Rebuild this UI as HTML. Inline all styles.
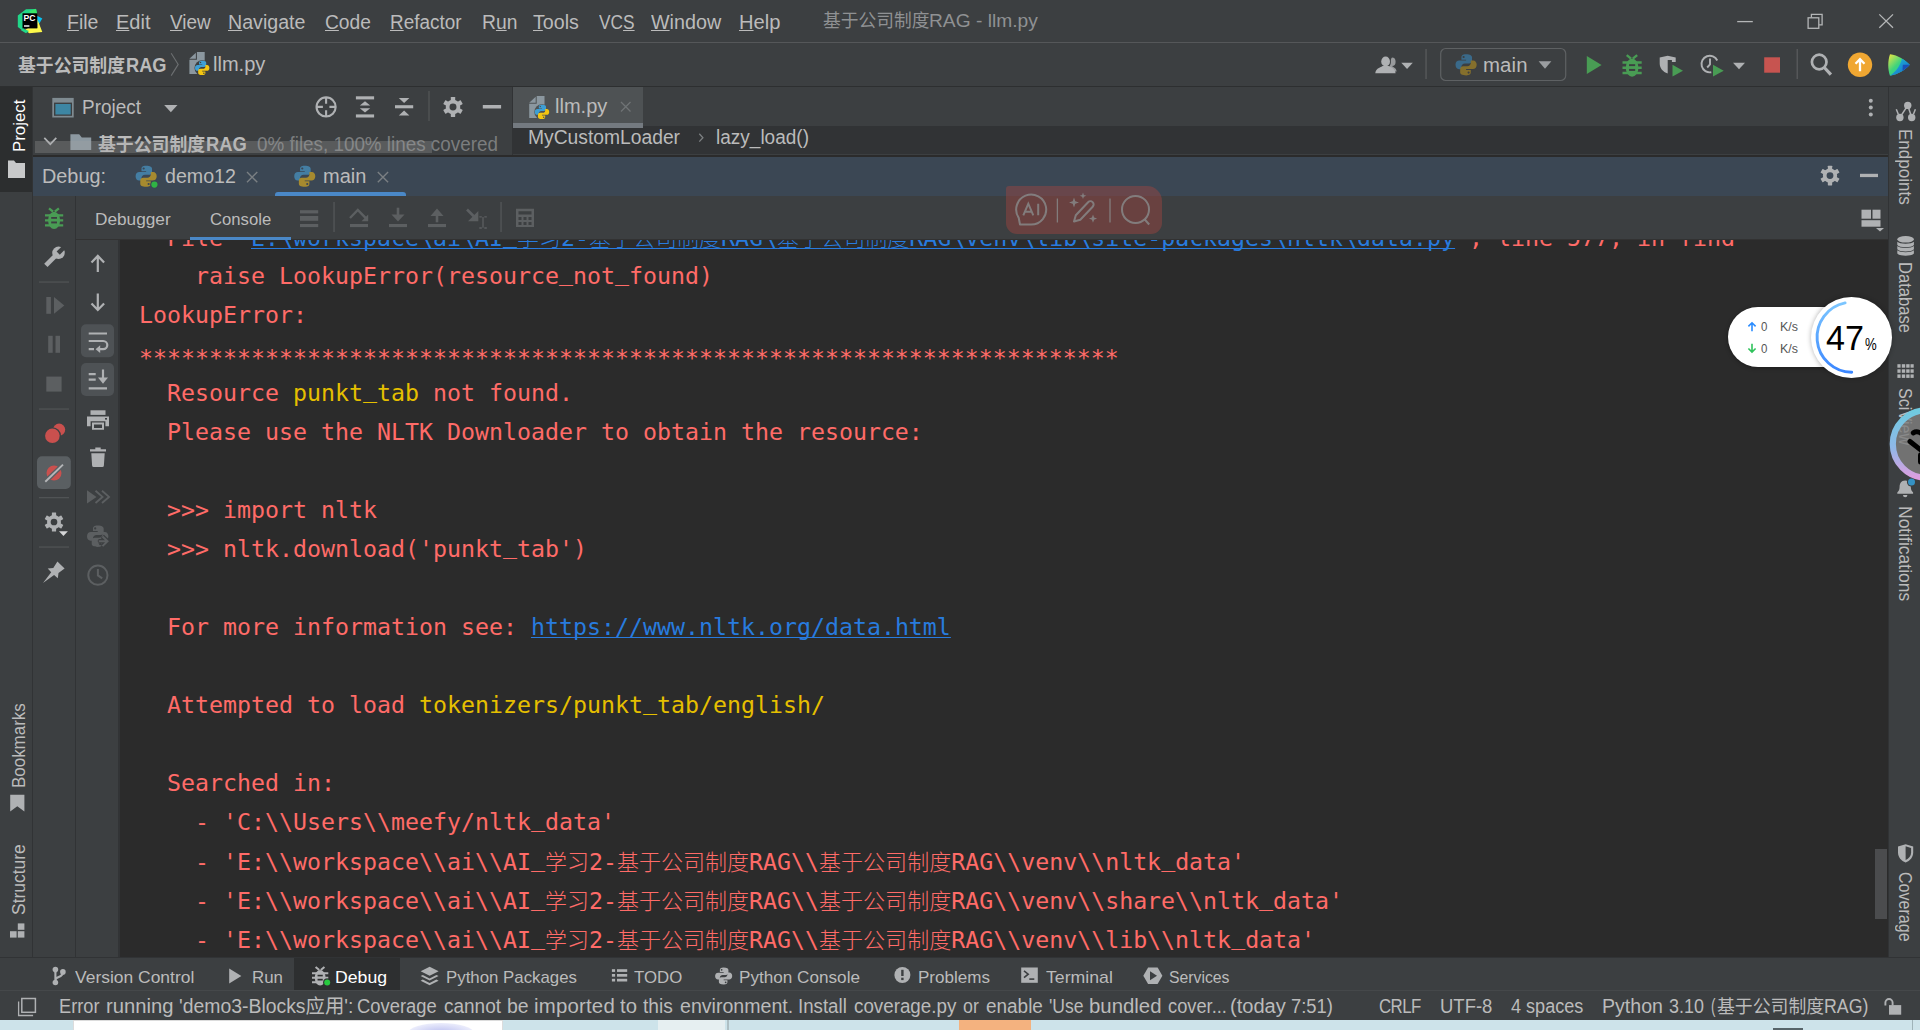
<!DOCTYPE html>
<html lang="zh"><head><meta charset="utf-8"><title>基于公司制度RAG - llm.py</title><style>
html,body{margin:0;padding:0;background:#3c3f41;overflow:hidden}
#root{position:relative;width:1920px;height:1030px;overflow:hidden;background:#3c3f41}
.b{position:absolute}
.i{position:absolute;overflow:visible}
.t{position:absolute;white-space:pre;transform-origin:0 0}
.t u{text-decoration:underline;text-decoration-thickness:1px;text-underline-offset:1.200px}
.r{position:absolute;width:0;height:0;transform-origin:0 0}
.cl0{position:absolute;left:20px;height:39px;white-space:pre;font:400 23.25px/39px 'DejaVu Sans Mono','Liberation Mono',monospace;letter-spacing:0}
.cj{font:300 22px/39px 'Noto Sans CJK SC',sans-serif}
.us{position:relative;top:-4px}.as{position:relative;top:4px}
.cr{color:#ff6b68}.cy{color:#e5bf00}.cl{color:#287bde;text-decoration:underline;text-decoration-thickness:1px;text-underline-offset:1.600px;text-decoration-skip-ink:none}
</style></head><body><div id="root">
<div class="b" style="left:0px;top:0px;width:1920px;height:1020px;background:#3c3f41;"></div>
<div class="b" style="left:0px;top:42px;width:1920px;height:1px;background:#555759;"></div>
<div class="b" style="left:0px;top:86px;width:1920px;height:1px;background:#2d2f30;"></div>
<div class="b" style="left:0px;top:87px;width:33px;height:870px;background:#3c3f41;"></div>
<div class="b" style="left:0px;top:87px;width:32px;height:105px;background:#2c2e2f;"></div>
<div class="b" style="left:32px;top:87px;width:1px;height:870px;background:#313335;"></div>
<div class="b" style="left:1888px;top:87px;width:1px;height:870px;background:#313335;"></div>
<div class="b" style="left:512px;top:87px;width:1px;height:69px;background:#313335;"></div>
<div class="b" style="left:513px;top:87px;width:130px;height:41px;background:#4e5254;"></div>
<div class="b" style="left:513px;top:123.3px;width:130px;height:4.7px;background:#747a80;"></div>
<div class="b" style="left:643px;top:126px;width:1245px;height:27.6px;background:#313335;"></div>
<div class="b" style="left:513px;top:128px;width:130px;height:25.6px;background:#313335;"></div>
<div class="b" style="left:33px;top:155.2px;width:1855px;height:1.8px;background:#2b2b2b;"></div>
<div class="b" style="left:33px;top:157px;width:1855px;height:39px;background:#3b4754;"></div>
<div class="b" style="left:275px;top:192px;width:131px;height:4px;background:#4a88c7;border-radius:3px 3px 0 0"></div>
<div class="b" style="left:75px;top:196px;width:1px;height:761px;background:#313335;"></div>
<div class="b" style="left:76px;top:239px;width:1812px;height:1px;background:#323232;"></div>
<div class="b" style="left:190px;top:237px;width:101px;height:3px;background:#4a88c7;"></div>
<div class="b" style="left:119px;top:240px;width:1769px;height:717px;background:#2b2b2b;"></div>
<div class="b" style="left:118px;top:240px;width:2px;height:717px;background:#323436;"></div>
<div class="b" id="console" style="left:119px;top:240px;width:1769px;height:717px;overflow:hidden">
<div class="cl0" style="top:-22.90px"><span class="cr">  File &quot;</span><span class="cl">E:\workspace\ai\AI<span class="us">_</span><span class="cj">学</span><span class="cj">习</span>2-<span class="cj">基</span><span class="cj">于</span><span class="cj">公</span><span class="cj">司</span><span class="cj">制</span><span class="cj">度</span>RAG\<span class="cj">基</span><span class="cj">于</span><span class="cj">公</span><span class="cj">司</span><span class="cj">制</span><span class="cj">度</span>RAG\venv\lib\site-packages\nltk\data.py</span><span class="cr">&quot;, line 577, in find</span></div>
<div class="cl0" style="top:16.10px"><span class="cr">    raise LookupError(resource<span class="us">_</span>not<span class="us">_</span>found)</span></div>
<div class="cl0" style="top:55.10px"><span class="cr">LookupError:</span></div>
<div class="cl0" style="top:94.10px"><span class="cr"><span class="as">**********************************************************************</span></span></div>
<div class="cl0" style="top:133.10px"><span class="cr">  Resource </span><span class="cy">punkt<span class="us">_</span>tab</span><span class="cr"> not found.</span></div>
<div class="cl0" style="top:172.10px"><span class="cr">  Please use the NLTK Downloader to obtain the resource:</span></div>
<div class="cl0" style="top:250.10px"><span class="cr">  &gt;&gt;&gt; import nltk</span></div>
<div class="cl0" style="top:289.10px"><span class="cr">  &gt;&gt;&gt; nltk.download(&#x27;punkt<span class="us">_</span>tab&#x27;)</span></div>
<div class="cl0" style="top:367.10px"><span class="cr">  For more information see: </span><span class="cl">https://www.nltk.org/data.html</span></div>
<div class="cl0" style="top:445.10px"><span class="cr">  Attempted to load </span><span class="cy">tokenizers/punkt<span class="us">_</span>tab/english/</span></div>
<div class="cl0" style="top:523.10px"><span class="cr">  Searched in:</span></div>
<div class="cl0" style="top:562.10px"><span class="cr">    - &#x27;C:\\Users\\meefy/nltk<span class="us">_</span>data&#x27;</span></div>
<div class="cl0" style="top:601.10px"><span class="cr">    - &#x27;E:\\workspace\\ai\\AI<span class="us">_</span><span class="cj">学</span><span class="cj">习</span>2-<span class="cj">基</span><span class="cj">于</span><span class="cj">公</span><span class="cj">司</span><span class="cj">制</span><span class="cj">度</span>RAG\\<span class="cj">基</span><span class="cj">于</span><span class="cj">公</span><span class="cj">司</span><span class="cj">制</span><span class="cj">度</span>RAG\\venv\\nltk<span class="us">_</span>data&#x27;</span></div>
<div class="cl0" style="top:640.10px"><span class="cr">    - &#x27;E:\\workspace\\ai\\AI<span class="us">_</span><span class="cj">学</span><span class="cj">习</span>2-<span class="cj">基</span><span class="cj">于</span><span class="cj">公</span><span class="cj">司</span><span class="cj">制</span><span class="cj">度</span>RAG\\<span class="cj">基</span><span class="cj">于</span><span class="cj">公</span><span class="cj">司</span><span class="cj">制</span><span class="cj">度</span>RAG\\venv\\share\\nltk<span class="us">_</span>data&#x27;</span></div>
<div class="cl0" style="top:679.10px"><span class="cr">    - &#x27;E:\\workspace\\ai\\AI<span class="us">_</span><span class="cj">学</span><span class="cj">习</span>2-<span class="cj">基</span><span class="cj">于</span><span class="cj">公</span><span class="cj">司</span><span class="cj">制</span><span class="cj">度</span>RAG\\<span class="cj">基</span><span class="cj">于</span><span class="cj">公</span><span class="cj">司</span><span class="cj">制</span><span class="cj">度</span>RAG\\venv\\lib\\nltk<span class="us">_</span>data&#x27;</span></div>
</div>
<div class="b" style="left:1875px;top:849px;width:12.3px;height:70px;background:#4b4c4e;"></div>
<div class="b" style="left:0px;top:957px;width:1920px;height:1px;background:#313335;"></div>
<div class="b" style="left:294px;top:958px;width:106px;height:33px;background:#2d2f30;"></div>
<div class="b" style="left:0px;top:990px;width:1920px;height:1px;background:#45484a;"></div>
<div class="b" style="left:0px;top:1019.5px;width:1920px;height:10.5px;background:#cde3ea;"></div>
<div class="b" style="left:72.5px;top:1020px;width:430px;height:10px;background:#dcdcdc;"></div>
<div class="b" style="left:73.5px;top:1021px;width:428px;height:9px;background:#ffffff;"></div>
<div class="b" style="left:658px;top:1020px;width:67px;height:10px;background:#e6eff1;"></div>
<div class="b" style="left:727px;top:1020px;width:2px;height:10px;background:#aebfc4;"></div>
<div class="b" style="left:959px;top:1020px;width:72px;height:10px;background:#f4b27f;"></div>
<div class="b" style="left:1912px;top:1020px;width:1px;height:10px;background:#9fb3b9;"></div>
<div class="b" style="left:408px;top:1023px;width:66px;height:20px;border-radius:50%;background:radial-gradient(ellipse at center,#b9bdf0 0%,#e4e6fa 60%,#ffffff 100%)"></div>
<div class="b" style="left:1773px;top:1028px;width:30px;height:2px;background:#3a4448;opacity:.8"></div>
<svg class="i" style="left:0;top:0" width="1920" height="1030" viewBox="0 0 1920 1030"><g><path fill="#21d789" d="M17.800 15.500L26 9.200 36.200 9l1 5H24v17.500L17.800 27z"/><path fill="#3bea62" d="M28 12l7.700-3.200 1.500 5.500z" opacity=".9"/><path fill="#07c3f2" d="M37 15.800l5.300 2.700-3.300 5.500H37z"/><path fill="#fcf84a" d="M37.300 19l5 13-13 1.200-4.300-3.200 3-2h9.300z"/><path fill="#21d789" d="M22.500 28.400l6.500 2.600-3 2.200-5-3z"/><rect x="22.500" y="13.300" width="14.800" height="15.100" fill="#000"/><rect x="24" y="25.300" width="5.400" height="1.400" fill="#fff"/></g>
<g fill="none" stroke="#b4b6b7" stroke-width="1.300"><path d="M1737.200 21.600h15.600"/><rect x="1808.100" y="17.800" width="10.700" height="10.500"/><path d="M1811.400 17.500v-3.100h10.700v10.500h-3"/><path d="M1879.300 14.400l13.700 13.400M1893 14.400l-13.700 13.400"/></g>
<path d="M171.200 53.200L178.200 64.400 171.200 75.600" fill="none" stroke="#6c6f71" stroke-width="1.1"/>
<g transform="translate(189.4 52) scale(1)" ><path fill="#8b979f" d="M0 6.700L6.500 .700V6.700z"/><path fill="#8b979f" d="M7.500 0H15.300V21.900H0V7.700H7.500z"/><circle cx="12.800" cy="15.900" r="7.700" fill="#3c3f41"/></g><g transform="translate(193.72941176470587 59.42941176470588) scale(1.0588235294117647)" ><path fill="#3e9fd4" d="M7.9 1.2C5.6 1.2 5 2.1 5 3.2v1.5h3v.6H3.6C2.3 5.3 1.2 6.2 1.2 8s1 2.8 2.2 2.8H5V9.2C5 8 6 7.1 7.2 7.1h2.7c1.1 0 1.9-.8 1.9-1.9v-2c0-1.100-1-2-3.900-2zM6.400 2.300a.7.7 0 1 1 0 1.400.7.700 0 0 1 0-1.400z"/><path fill="#f2c511" transform="rotate(180 8 8)" d="M7.9 1.2C5.6 1.2 5 2.1 5 3.2v1.5h3v.6H3.6C2.3 5.3 1.2 6.2 1.2 8s1 2.8 2.2 2.8H5V9.2C5 8 6 7.1 7.2 7.1h2.7c1.1 0 1.9-.8 1.9-1.9v-2c0-1.100-1-2-3.900-2zM6.400 2.300a.7.7 0 1 1 0 1.400.7.700 0 0 1 0-1.400z"/></g>
<g transform="translate(529.2 96) scale(1)" ><path fill="#8b979f" d="M0 6.700L6.500 .700V6.700z"/><path fill="#8b979f" d="M7.500 0H15.300V21.900H0V7.700H7.500z"/><circle cx="12.800" cy="15.900" r="7.700" fill="#4e5254"/></g><g transform="translate(533.529411764706 103.42941176470589) scale(1.0588235294117647)" ><path fill="#3e9fd4" d="M7.9 1.2C5.6 1.2 5 2.1 5 3.2v1.5h3v.6H3.6C2.3 5.3 1.2 6.2 1.2 8s1 2.8 2.2 2.8H5V9.2C5 8 6 7.1 7.2 7.1h2.7c1.1 0 1.9-.8 1.9-1.9v-2c0-1.100-1-2-3.900-2zM6.400 2.300a.7.7 0 1 1 0 1.400.7.700 0 0 1 0-1.400z"/><path fill="#f2c511" transform="rotate(180 8 8)" d="M7.9 1.2C5.6 1.2 5 2.1 5 3.2v1.5h3v.6H3.6C2.3 5.3 1.2 6.2 1.2 8s1 2.8 2.2 2.8H5V9.2C5 8 6 7.1 7.2 7.1h2.7c1.1 0 1.9-.8 1.9-1.9v-2c0-1.100-1-2-3.900-2zM6.400 2.300a.7.7 0 1 1 0 1.400.7.700 0 0 1 0-1.400z"/></g>
<rect x="52.300" y="97.900" width="21.400" height="19.600" fill="#7f8b91"/><rect x="54" y="102.600" width="18" height="13.200" fill="#3c3f41"/><rect x="55.400" y="104" width="15.300" height="10.500" fill="#3d86a3"/>
<path d="M164.200 105h13.300l-6.650 7.300z" fill="#afb1b3"/>
<g fill="none" stroke="#afb1b3" stroke-width="2.100"><circle cx="326.100" cy="106.900" r="9.550"/><path d="M326.100 97.500v6.200M326.100 110.200v6.200M316.700 106.900h6.200M329.400 106.900h6.200"/></g>
<g fill="#afb1b3"><rect x="355.900" y="96.300" width="18.200" height="3.100"/><rect x="355.900" y="114.400" width="18.200" height="3.100"/><path d="M365 101.300l5.200 4.300h-10.400zM365 112.500l5.200-4.300h-10.400z"/></g>
<g fill="#afb1b3"><rect x="395" y="105.200" width="18.200" height="3.100"/><path d="M404.100 103.100l5.300-5h-10.600zM404.100 110.500l5.300 5h-10.600z"/></g>
<rect x="428.400" y="91" width="1.200" height="30" fill="#555759"/>
<g transform="translate(440.8787878787879 94.87878787878788) scale(1.5151515151515151)" ><g transform="translate(8 8)" fill="#afb1b3"><rect x="-1.45" y="-6.6" width="2.9" height="3" rx=".3" transform="rotate(0)"/><rect x="-1.45" y="-6.6" width="2.9" height="3" rx=".3" transform="rotate(60)"/><rect x="-1.45" y="-6.6" width="2.9" height="3" rx=".3" transform="rotate(120)"/><rect x="-1.45" y="-6.6" width="2.9" height="3" rx=".3" transform="rotate(180)"/><rect x="-1.45" y="-6.6" width="2.9" height="3" rx=".3" transform="rotate(240)"/><rect x="-1.45" y="-6.6" width="2.9" height="3" rx=".3" transform="rotate(300)"/><circle r="3.55" fill="none" stroke="#afb1b3" stroke-width="2.5"/></g></g>
<rect x="482.800" y="105" width="18.300" height="3.500" fill="#afb1b3"/>
<path d="M44.300 137.800l6 6.400 6-6.400" fill="none" stroke="#afb1b3" stroke-width="1.700"/>
<path fill="#8d99a1" d="M70.400 134.200h8.800l2.600 3.300h9.400V150H70.400z"/>
<path d="M621 102l9.500 9.500M630.500 102l-9.500 9.500" stroke="#6f7375" stroke-width="1.300" fill="none"/>
<path d="M699.300 133.800l3.600 3.900-3.600 3.900" fill="none" stroke="#7d8082" stroke-width="1.300"/>
<g fill="#afb1b3"><circle cx="1870.800" cy="100.800" r="2"/><circle cx="1870.800" cy="107.600" r="2"/><circle cx="1870.800" cy="114.400" r="2"/></g><g transform="translate(133.73823529411763 163.83823529411762) scale(1.5514705882352942)" ><path fill="#447ea3" d="M7.9 1.2C5.6 1.2 5 2.1 5 3.2v1.5h3v.6H3.6C2.3 5.3 1.2 6.2 1.2 8s1 2.8 2.2 2.8H5V9.2C5 8 6 7.1 7.2 7.1h2.7c1.1 0 1.9-.8 1.9-1.9v-2c0-1.100-1-2-3.900-2zM6.400 2.300a.7.7 0 1 1 0 1.400.7.700 0 0 1 0-1.400z"/><path fill="#a68a2f" transform="rotate(180 8 8)" d="M7.9 1.2C5.6 1.2 5 2.1 5 3.2v1.5h3v.6H3.6C2.3 5.3 1.2 6.2 1.2 8s1 2.8 2.2 2.8H5V9.2C5 8 6 7.1 7.2 7.1h2.7c1.1 0 1.9-.8 1.9-1.9v-2c0-1.100-1-2-3.900-2zM6.400 2.300a.7.7 0 1 1 0 1.400.7.700 0 0 1 0-1.400z"/></g>
<circle cx="154.400" cy="184.600" r="4.200" fill="#3b4754"/><circle cx="154.400" cy="184.600" r="3.100" fill="#2fb344"/>
<g transform="translate(292.3382352941176 163.83823529411762) scale(1.5514705882352942)" ><path fill="#447ea3" d="M7.9 1.2C5.6 1.2 5 2.1 5 3.2v1.5h3v.6H3.6C2.3 5.3 1.2 6.2 1.2 8s1 2.8 2.2 2.8H5V9.2C5 8 6 7.1 7.2 7.1h2.7c1.1 0 1.9-.8 1.9-1.9v-2c0-1.100-1-2-3.900-2zM6.400 2.300a.7.7 0 1 1 0 1.400.7.700 0 0 1 0-1.400z"/><path fill="#a68a2f" transform="rotate(180 8 8)" d="M7.9 1.2C5.6 1.2 5 2.1 5 3.2v1.5h3v.6H3.6C2.3 5.3 1.2 6.2 1.2 8s1 2.8 2.2 2.8H5V9.2C5 8 6 7.1 7.2 7.1h2.7c1.1 0 1.9-.8 1.9-1.9v-2c0-1.100-1-2-3.900-2zM6.400 2.300a.7.7 0 1 1 0 1.400.7.700 0 0 1 0-1.400z"/></g>
<path d="M247 172l10.300 10.300M257.300 172l-10.300 10.300" stroke="#7a7f83" stroke-width="1.400" fill="none"/>
<path d="M377.800 172l10.300 10.300M388.100 172l-10.300 10.300" stroke="#7a7f83" stroke-width="1.400" fill="none"/>
<g transform="translate(1818.121212121212 163.72121212121212) scale(1.484848484848485)" ><g transform="translate(8 8)" fill="#afb1b3"><rect x="-1.45" y="-6.6" width="2.9" height="3" rx=".3" transform="rotate(0)"/><rect x="-1.45" y="-6.6" width="2.9" height="3" rx=".3" transform="rotate(60)"/><rect x="-1.45" y="-6.6" width="2.9" height="3" rx=".3" transform="rotate(120)"/><rect x="-1.45" y="-6.6" width="2.9" height="3" rx=".3" transform="rotate(180)"/><rect x="-1.45" y="-6.6" width="2.9" height="3" rx=".3" transform="rotate(240)"/><rect x="-1.45" y="-6.6" width="2.9" height="3" rx=".3" transform="rotate(300)"/><circle r="3.55" fill="none" stroke="#afb1b3" stroke-width="2.5"/></g></g>
<rect x="1860" y="173.800" width="18" height="3.300" fill="#afb1b3"/>
<g fill="#afb1b3"><rect x="1861.500" y="209.700" width="9.500" height="9"/><rect x="1872.500" y="209.700" width="8" height="9"/><rect x="1861.500" y="220.200" width="19" height="6.500"/><path d="M1876 228h8l-4 3.600z"/></g>
<g transform="translate(45 208.1) scale(1.0)" ><g fill="none" stroke="#499c54" stroke-width="2.300"><path d="M4 .3l4.100 3.300M13.900 .3l-4.100 3.300"/><path d="M0 7.300h18.200M0 12.200h18.200M0 17.200h18.200"/></g><ellipse cx="9.100" cy="12.200" rx="6" ry="8.600" fill="#499c54"/><rect x="6.200" y="8.900" width="5.800" height="1.800" fill="#3c3f41"/><rect x="6.200" y="13.400" width="5.800" height="1.900" fill="#3c3f41"/></g>
<g transform="translate(58.500 252.800) rotate(45)"><circle r="6.250" fill="#afb1b3"/><rect x="-2.350" y="3" width="4.700" height="14.900" fill="#afb1b3"/><rect x="-2.250" y="-7.500" width="4.500" height="7.900" fill="#3c3f41"/></g>
<rect x="39" y="281.4" width="30" height="1.300" fill="#505355"/>
<rect x="39" y="408.4" width="30" height="1.300" fill="#505355"/>
<rect x="39" y="497.0" width="30" height="1.300" fill="#505355"/>
<rect x="39" y="546.4" width="30" height="1.300" fill="#505355"/>
<g fill="#5c5f61"><rect x="46.300" y="297" width="4.600" height="16.800"/><path d="M54 297l10.300 8.400L54 313.800z"/></g>
<g fill="#5c5f61"><rect x="48.200" y="335.800" width="4.500" height="17"/><rect x="55.500" y="335.800" width="4.500" height="17"/></g>
<rect x="46.300" y="376.600" width="15.300" height="15" fill="#5c5f61"/>
<circle cx="59.100" cy="429.700" r="6.100" fill="#c9504e"/><circle cx="52.400" cy="435.800" r="8.600" fill="#3c3f41"/><circle cx="52.400" cy="435.800" r="7.300" fill="#c9504e"/>
<rect x="37" y="456.200" width="33.800" height="32.700" rx="5" fill="#5a5f62"/>
<circle cx="54" cy="473" r="7.500" fill="#c9504e"/><path d="M45.500 481.500L62.800 464.800" stroke="#5a5f62" stroke-width="4.600"/><path d="M45.300 481.700L63 464.600" stroke="#b4b6b8" stroke-width="1.900"/>
<g transform="translate(42.36363636363636 510.3636363636364) scale(1.4545454545454546)" ><g transform="translate(8 8)" fill="#afb1b3"><rect x="-1.45" y="-6.6" width="2.9" height="3" rx=".3" transform="rotate(0)"/><rect x="-1.45" y="-6.6" width="2.9" height="3" rx=".3" transform="rotate(60)"/><rect x="-1.45" y="-6.6" width="2.9" height="3" rx=".3" transform="rotate(120)"/><rect x="-1.45" y="-6.6" width="2.9" height="3" rx=".3" transform="rotate(180)"/><rect x="-1.45" y="-6.6" width="2.9" height="3" rx=".3" transform="rotate(240)"/><rect x="-1.45" y="-6.6" width="2.9" height="3" rx=".3" transform="rotate(300)"/><circle r="3.55" fill="none" stroke="#afb1b3" stroke-width="2.5"/></g></g>
<path d="M59 531.200h8.900l-4.450 4.800z" fill="#d5d6d7"/>
<path d="M43 583L51.200 572.200 47.700 568.500 53.300 568.100 57.400 561.400 64.600 568.400 58.500 573.100 57.800 578.300 54.100 575.100z" fill="#afb1b3"/>
<g fill="none" stroke="#afb1b3" stroke-width="2.200"><path d="M97.800 272V256.500M91.500 262.500l6.300-6.600 6.300 6.600"/><path d="M97.800 293.600V309.500M91.500 303.400l6.300 6.600 6.300-6.600"/></g>
<rect x="81" y="324.200" width="33" height="33" rx="5" fill="#4e5255"/>
<g fill="none" stroke="#afb1b3" stroke-width="2.200"><path d="M88.700 333.500h18.300M88.700 341h14.500a4.100 4.100 0 0 1 0 8.200h-3.500M88.700 349.200h5.300"/></g><path d="M100.200 345.300v7.800l-4.600-3.900z" fill="#afb1b3"/>
<rect x="81" y="363" width="33" height="33" rx="5" fill="#4e5255"/>
<g fill="none" stroke="#afb1b3" stroke-width="2.200"><path d="M88.700 374.200h7M88.700 379.700h7M88.700 388.300h18.300M103 369.500v11"/></g><path d="M98 377.500h10l-5 6.300z" fill="#afb1b3"/>
<g fill="#afb1b3"><rect x="90.500" y="410.300" width="15" height="4.600"/><path d="M87 416.500h22v9.800h-3.600v-5h-14.800v5H87z"/><path d="M92 422.600h12v7.200H92zM94 424.400v3.600h8v-3.600z" fill-rule="evenodd"/><rect x="105" y="418" width="2" height="1.600" fill="#3c3f41"/></g>
<g fill="#afb1b3"><path d="M95.300 447.400h5.400v1.800h5.300v2.400H90v-2.400h5.300z"/><path d="M91.300 453.300h13.400l-.8 12.200a1.600 1.600 0 0 1-1.600 1.500h-8.600a1.600 1.600 0 0 1-1.600-1.500z"/></g>
<path d="M87 490.300l9.500 6.600-9.500 6.600z" fill="#5c5f61"/><path d="M95.500 490.800l7 6.100-7 6.100M102 490.800l7 6.100-7 6.100" fill="none" stroke="#5c5f61" stroke-width="1.900"/>
<g transform="translate(85.11176470588235 523.7117647058824) scale(1.5735294117647058)" ><path fill="#5c5f61" d="M7.9 1.2C5.6 1.2 5 2.1 5 3.2v1.5h3v.6H3.6C2.3 5.3 1.2 6.2 1.2 8s1 2.8 2.2 2.8H5V9.2C5 8 6 7.1 7.2 7.1h2.7c1.1 0 1.9-.8 1.9-1.9v-2c0-1.100-1-2-3.900-2zM6.400 2.300a.7.7 0 1 1 0 1.400.7.700 0 0 1 0-1.400z"/><path fill="#5c5f61" transform="rotate(180 8 8)" d="M7.9 1.2C5.6 1.2 5 2.1 5 3.2v1.5h3v.6H3.6C2.3 5.3 1.2 6.2 1.2 8s1 2.8 2.2 2.8H5V9.2C5 8 6 7.1 7.2 7.1h2.7c1.1 0 1.9-.8 1.9-1.9v-2c0-1.100-1-2-3.900-2zM6.400 2.300a.7.7 0 1 1 0 1.400.7.700 0 0 1 0-1.400z"/></g>
<path d="M102.300 536.300l5.200 5-5.200 5M98.500 541.300h8" stroke="#3c3f41" stroke-width="4.600" fill="none"/><path d="M102.500 536.500l5 4.800-5 4.800M99 541.300h8" stroke="#5c5f61" stroke-width="2" fill="none"/>
<circle cx="97.900" cy="575.200" r="9.600" fill="none" stroke="#5c5f61" stroke-width="2"/><path d="M97.900 569v6.400l4.300 3" fill="none" stroke="#5c5f61" stroke-width="2"/>
<g fill="#5c5f61"><rect x="300" y="210.200" width="18.200" height="3.200"/><rect x="300" y="216" width="18.200" height="4.800"/><rect x="300" y="224" width="18.200" height="3.100"/></g>
<rect x="333.300" y="202" width="1.500" height="30" fill="#515456"/><rect x="500.300" y="202" width="1.500" height="30" fill="#515456"/>
<g fill="#5c5f61"><rect x="350" y="224" width="18" height="3.100"/><path d="M361.500 221.300h6.700v-6.700z"/></g><path d="M350 218l7.800-8 8 8.200" fill="none" stroke="#5c5f61" stroke-width="2.400"/>
<g fill="#5c5f61"><rect x="389" y="224" width="18" height="3.100"/><path d="M391.500 214.500h13l-6.500 7z"/><rect x="396.700" y="207.700" width="2.600" height="8"/></g>
<g fill="#5c5f61"><rect x="428" y="224" width="18" height="3.100"/><path d="M430.500 216h13l-6.500-7.500z"/><rect x="435.700" y="215" width="2.600" height="7.300"/></g>
<path d="M467 209.500l8.500 8.500" stroke="#5c5f61" stroke-width="2.600" fill="none"/><path d="M478.300 211v10.300h-10.300z" fill="#5c5f61"/><path d="M479.300 216.800h2.500m2.500 0h2.500M479.300 228h2.500m2.500 0h2.500M483 217v10.800" stroke="#5c5f61" stroke-width="1.300" fill="none"/>
<g fill="#5c5f61"><path d="M516 208.800h18V227h-18zM518.500 211.300v3.200h13v-3.200zM518.500 217v3h3v-3zM523.500 217v3h3v-3zM528.500 217v3h3v-3zM518.500 222v3h3v-3zM523.500 222v3h3v-3zM528.500 222v3h3v-3z" fill-rule="evenodd"/></g><g fill="#afb1b3"><path d="M1392 57.500a3.600 4.300 0 0 1 0 8.600c1.500 1.500 4.300 2 4.600 5.400h-4.200c-.8-2.500-2.600-3.600-3.500-4.500 1.400-1.500 2-3.400 2-5 0-1.700-.3-3 1.100-4.500z" opacity=".8"/><ellipse cx="1385.600" cy="61.500" rx="4.400" ry="5.100"/><path d="M1375.300 73.200c.3-4.600 4.200-5.500 7.300-7.300h6c3.100 1.800 6.700 2.700 7 7.300z"/></g>
<path d="M1401.300 62.700h11.500l-5.750 6.300z" fill="#afb1b3"/>
<rect x="1425.300" y="49" width="1.500" height="30" fill="#555759"/>
<rect x="1440.700" y="48.500" width="125" height="32" rx="5" fill="none" stroke="#5e6163" stroke-width="1.200"/>
<g transform="translate(1453.629411764706 52.32941176470589) scale(1.5588235294117647)" ><path fill="#3a6a8a" d="M7.9 1.2C5.6 1.2 5 2.1 5 3.2v1.5h3v.6H3.6C2.3 5.3 1.2 6.2 1.2 8s1 2.8 2.2 2.8H5V9.2C5 8 6 7.1 7.2 7.1h2.7c1.1 0 1.9-.8 1.9-1.9v-2c0-1.100-1-2-3.900-2zM6.400 2.300a.7.7 0 1 1 0 1.400.7.700 0 0 1 0-1.400z"/><path fill="#846f2c" transform="rotate(180 8 8)" d="M7.9 1.2C5.6 1.2 5 2.1 5 3.2v1.5h3v.6H3.6C2.3 5.3 1.2 6.2 1.2 8s1 2.8 2.2 2.8H5V9.2C5 8 6 7.1 7.2 7.1h2.7c1.1 0 1.9-.8 1.9-1.9v-2c0-1.100-1-2-3.900-2zM6.400 2.300a.7.7 0 1 1 0 1.400.7.700 0 0 1 0-1.400z"/></g>
<path d="M1538.600 61.200h12.800l-6.400 7.600z" fill="#9a9da0"/>
<path d="M1586.800 56l14.800 9-14.800 9z" fill="#499c54"/>
<g transform="translate(1622.5 54.8) scale(1.054945054945055)" ><g fill="none" stroke="#499c54" stroke-width="2.300"><path d="M4 .3l4.100 3.300M13.900 .3l-4.100 3.300"/><path d="M0 7.300h18.200M0 12.200h18.200M0 17.200h18.200"/></g><ellipse cx="9.100" cy="12.200" rx="6" ry="8.600" fill="#499c54"/><rect x="6.200" y="8.900" width="5.800" height="1.800" fill="#3c3f41"/><rect x="6.200" y="13.400" width="5.800" height="1.900" fill="#3c3f41"/></g>
<path d="M1659.700 57.500l8-1.700 8 1.700v4.500h-3.800v-2h-4.200v13.500c-4.800-1.600-8-5.300-8-10z" fill="#afb1b3"/><path d="M1667.700 58h4.200v15.300" fill="none" stroke="#afb1b3" stroke-width="0"/><path d="M1672.500 64.800l10.500 5.850-10.500 5.850z" fill="#499c54"/>
<path d="M1717.300 60.500a8.300 8.300 0 1 0-6 11.700" fill="none" stroke="#afb1b3" stroke-width="1.900"/><path d="M1710 58.500v6l-2.800 3" fill="none" stroke="#afb1b3" stroke-width="1.900"/><path d="M1713 64.800l10.700 5.850-10.700 5.850z" fill="#499c54"/>
<path d="M1733 62.700h12l-6 6.600z" fill="#afb1b3"/>
<rect x="1764.200" y="57.300" width="15.800" height="15.400" fill="#c75450"/>
<rect x="1796.500" y="49" width="1.500" height="30" fill="#555759"/>
<circle cx="1819.200" cy="62" r="7.300" fill="none" stroke="#afb1b3" stroke-width="2.700"/><path d="M1824.300 67.500l6.600 7.200" stroke="#afb1b3" stroke-width="3.200"/>
<circle cx="1860" cy="64.800" r="12.200" fill="#f0a732"/><path d="M1860 71.300v-11.500M1855.500 63.700l4.500-4.500 4.500 4.500" fill="none" stroke="#fff" stroke-width="2.300"/>
<defs><linearGradient id="lg1" x1="0" y1="0" x2="1" y2="1"><stop offset="0" stop-color="#f2e640"/><stop offset=".45" stop-color="#3fd47c"/><stop offset="1" stop-color="#17b8c9"/></linearGradient><linearGradient id="lg2" x1="0" y1="0" x2="1" y2="1"><stop offset="0" stop-color="#1bc6d9"/><stop offset="1" stop-color="#1a62c9"/></linearGradient></defs><path d="M1890 54.200c8 1 15 5.500 19.700 10.600-4.700 5.100-11.700 9.900-19.700 10.900-2.300-6.500-2.300-15 0-21.500z" fill="url(#lg1)"/><path d="M1902 58.700c3 1.700 5.500 3.700 7.700 6.100-4.700 5.100-11.700 9.900-19.700 10.900 5.500-3.700 10-9.500 12-17z" fill="url(#lg2)"/><path d="M1902.800 64.800h6.900c-2 2.300-4.500 4.500-7.200 6.200z" fill="#1a4fb8"/>
<g fill="none" stroke="#afb1b3" stroke-width="2.100"><path d="M55.400 970v12M55.400 980c.5-4 7.500-2 7.500-8"/></g><g fill="#afb1b3"><circle cx="55.400" cy="969.600" r="2.800"/><circle cx="55.400" cy="982.500" r="2.800"/><circle cx="62.900" cy="971.900" r="2.800"/></g>
<path d="M229.200 968.400l12.200 7.500-12.200 7.500z" fill="#afb1b3"/>
<g transform="translate(312 966.8) scale(0.8956043956043956)" ><g fill="none" stroke="#afb1b3" stroke-width="2.300"><path d="M4 .3l4.100 3.300M13.900 .3l-4.100 3.300"/><path d="M0 7.300h18.200M0 12.200h18.200M0 17.200h18.200"/></g><ellipse cx="9.100" cy="12.200" rx="6" ry="8.600" fill="#afb1b3"/><rect x="6.200" y="8.900" width="5.800" height="1.800" fill="#2d2f30"/><rect x="6.200" y="13.400" width="5.800" height="1.900" fill="#2d2f30"/></g>
<circle cx="327.200" cy="982.600" r="4.100" fill="#2d2f30"/><circle cx="327.200" cy="982.600" r="3" fill="#27c93f"/>
<g fill="#afb1b3"><path d="M429.600 966.800l9 4.500-9 4.500-9-4.500z"/><path d="M422.800 975l6.800 3.400 6.800-3.400 2.200 1.100-9 4.500-9-4.500z"/><path d="M422.800 979.600l6.800 3.400 6.800-3.400 2.200 1.100-9 4.500-9-4.500z"/></g>
<g fill="#afb1b3"><rect x="611.900" y="969.2" width="3.200" height="2.700"/><rect x="617" y="969.2" width="10.200" height="2.700"/><rect x="611.900" y="974" width="3.200" height="2.700"/><rect x="617" y="974" width="10.200" height="2.700"/><rect x="611.900" y="978.8" width="3.200" height="2.700"/><rect x="617" y="978.8" width="10.200" height="2.700"/></g>
<g transform="translate(713.5911764705883 965.9911764705882) scale(1.2573529411764708)" ><path fill="#afb1b3" d="M7.9 1.2C5.6 1.2 5 2.1 5 3.2v1.5h3v.6H3.6C2.3 5.3 1.2 6.2 1.2 8s1 2.8 2.2 2.8H5V9.2C5 8 6 7.1 7.2 7.1h2.7c1.1 0 1.9-.8 1.9-1.9v-2c0-1.100-1-2-3.900-2zM6.400 2.300a.7.7 0 1 1 0 1.400.7.700 0 0 1 0-1.400z"/><path fill="#afb1b3" transform="rotate(180 8 8)" d="M7.9 1.2C5.6 1.2 5 2.1 5 3.2v1.5h3v.6H3.6C2.3 5.3 1.2 6.2 1.2 8s1 2.8 2.2 2.8H5V9.2C5 8 6 7.1 7.2 7.1h2.7c1.1 0 1.9-.8 1.9-1.9v-2c0-1.100-1-2-3.900-2zM6.400 2.300a.7.7 0 1 1 0 1.400.7.700 0 0 1 0-1.400z"/></g>
<circle cx="902.400" cy="975" r="8" fill="#afb1b3"/><rect x="901.200" y="969.800" width="2.400" height="6.200" fill="#3c3f41"/><rect x="901.200" y="977.700" width="2.400" height="2.400" fill="#3c3f41"/>
<rect x="1021.200" y="967.500" width="16.600" height="15.300" fill="#afb1b3"/><path d="M1024 970.800l4.200 3.400-4.200 3.400" fill="none" stroke="#3c3f41" stroke-width="1.600"/><rect x="1029.300" y="978.300" width="5" height="1.600" fill="#3c3f41"/>
<path d="M1143.300 975.800l4.800-8.300h9.500l4.800 8.300-4.800 8.300h-9.500z" fill="#afb1b3"/><path d="M1150 971.300l7 4.500-7 4.500z" fill="#3c3f41"/>
<rect x="21.800" y="998.500" width="13.600" height="13.800" fill="none" stroke="#afb1b3" stroke-width="1.500"/><path d="M18.600 1001.500v14h14.500" fill="none" stroke="#afb1b3" stroke-width="1.300"/>
<rect x="1889" y="1005.100" width="12.200" height="9.600" fill="#afb1b3"/><path d="M1885.400 1005.600v-3a3.600 3.600 0 0 1 7.200 0v3" fill="none" stroke="#afb1b3" stroke-width="1.900"/>
<path d="M8 160.500h6l2 2.500h9v15H8z" fill="#c8c9ca"/>
<path d="M10.200 794.800h14.200v16.600l-7.100-5.200-7.100 5.200z" fill="#afb1b3"/>
<g fill="#afb1b3"><rect x="17.800" y="923.400" width="6.600" height="6.400"/><rect x="10" y="931.200" width="6.600" height="6.400"/><rect x="17.800" y="931.200" width="6.600" height="6.400"/></g>
<g fill="#afb1b3"><circle cx="1907.750" cy="105.400" r="3.700"/><circle cx="1899.900" cy="117.500" r="3.700"/><circle cx="1911.700" cy="117.500" r="3.700"/></g><path d="M1899.900 117.500l7.850-12.100 4 12.100M1896.300 109.300l2 5M1915.400 109.300l-2 5" fill="none" stroke="#afb1b3" stroke-width="1.500"/>
<g fill="#afb1b3"><ellipse cx="1905.600" cy="239.300" rx="8.300" ry="3.300"/><path d="M1897.300 241.8c2 2.600 14.600 2.600 16.600 0v3.300c-2 2.900-14.600 2.900-16.600 0z"/><path d="M1897.300 246c2 2.600 14.600 2.600 16.600 0v3.300c-2 2.900-14.600 2.900-16.600 0z"/><path d="M1897.300 250.2c2 2.600 14.600 2.600 16.600 0v3.300c-2 2.900-14.600 2.900-16.600 0z"/></g>
<g fill="#afb1b3"><rect x="1897.4" y="364.2" width="3.2" height="3.500"/><rect x="1901.8" y="364.2" width="3.4" height="3.500"/><rect x="1906.2" y="364.2" width="3.4" height="3.500"/><rect x="1910.5" y="364.2" width="3.2" height="3.500"/><rect x="1897.4" y="369.3" width="3.2" height="3.500"/><rect x="1901.8" y="369.3" width="3.4" height="3.500"/><rect x="1906.2" y="369.3" width="3.4" height="3.500"/><rect x="1910.5" y="369.3" width="3.2" height="3.500"/><rect x="1897.4" y="374.4" width="3.2" height="3.500"/><rect x="1901.8" y="374.4" width="3.4" height="3.500"/><rect x="1906.2" y="374.4" width="3.4" height="3.500"/><rect x="1910.5" y="374.4" width="3.2" height="3.500"/></g>
<path d="M1905.200 480.500c4.200 0 5.600 3.300 5.600 6.500 0 3 1.200 4.300 2.300 5.400v1.300h-15.800v-1.300c1.100-1.100 2.300-2.400 2.300-5.400 0-3.200 1.400-6.500 5.600-6.500zM1903 495h4.400a2.200 2.200 0 0 1-4.400 0z" fill="#afb1b3"/>
<circle cx="1911.500" cy="482" r="4.600" fill="#3c3f41"/><circle cx="1911.500" cy="482" r="3.500" fill="#3592c4"/>
<path d="M1898 846.400l7.600-2.200 7.600 2.200v6c0 4.700-3.200 8.300-7.600 10.100-4.400-1.800-7.600-5.400-7.600-10.100z" fill="#afb1b3"/><path d="M1905.600 846.300l5.500 1.600v4.500c0 3.400-2.200 6.200-5.500 7.700z" fill="#3c3f41"/></svg><div class="t" style="left:23.6px;top:13.1px;font:700 8.6px/10px 'Liberation Sans',sans-serif;color:#fff;letter-spacing:-0.2px">PC</div>
<div class="b" style="left:1728px;top:307.400px;width:140px;height:60px;border-radius:30px;background:linear-gradient(90deg,#fff 0,#fff 62%,#e9e9e9 78%,#d4d4d4 100%);box-shadow:0 1px 4px rgba(0,0,0,.35)"></div>
<div class="b" style="left:1810.700px;top:296.900px;width:81px;height:81px;border-radius:50%;background:#fff;box-shadow:0 0 5px rgba(0,0,0,.3)"></div>
<svg class="i" style="left:1700px;top:290px" width="220" height="100" viewBox="1700 290 220 100"><defs><linearGradient id="arcg" x1="0" y1="0" x2="0" y2="1"><stop offset="0" stop-color="#7cc6ff"/><stop offset="1" stop-color="#3a86ff"/></linearGradient></defs><path d="M1845.100 302.900A35 35 0 0 0 1851.700 372.200" fill="none" stroke="url(#arcg)" stroke-width="2.900" stroke-linecap="round"/><path d="M1752 331.200v-8.200M1748.400 326.400l3.600-3.600 3.600 3.600" fill="none" stroke="#2b8cff" stroke-width="1.600"/><path d="M1752 343.800v8.200M1748.400 348.500l3.600 3.600 3.600-3.600" fill="none" stroke="#2fc25b" stroke-width="1.600"/></svg>
<div class="b" style="left:1005.600px;top:186.200px;width:156.500px;height:48.200px;border-radius:3px 15px 11px 11px;background:rgba(172,70,62,.40)"></div>
<svg class="i" style="left:1000px;top:180px" width="170" height="60" viewBox="1000 180 170 60"><g fill="none" stroke="rgba(135,135,135,.85)" stroke-width="2"><path d="M1020 224.500h11.200a15 15 0 1 0-12.500-6.700z" stroke-linejoin="round"/><path d="M1023.300 215.300l5-11.600 5 11.600M1025 211.800h6.600M1038.200 203.700v11.600"/><path d="M1057.400 198.500v24M1110 198.500v24" stroke-width="1.300"/><path d="M1074 221.500l1.800-6.300 12.300-13a3.200 3.200 0 0 1 4.600 4.500l-12.400 13z" stroke-linejoin="round"/><circle cx="1135.500" cy="209.400" r="13.500"/><path d="M1144.800 219.500l4.400 5"/></g><g fill="rgba(135,135,135,.85)"><path d="M1074 197.500l1.300 3.700 3.700 1.300-3.700 1.300-1.300 3.700-1.300-3.700-3.700-1.300 3.700-1.300z"/><path d="M1083 192.500l.9 2.400 2.400.9-2.400.9-.9 2.400-.9-2.400-2.400-.9 2.400-.9z"/><path d="M1093 214.500l1.100 3 3 1.100-3 1.100-1.100 3-1.100-3-3-1.100 3-1.100z"/></g></svg>
<div class="t " style="left:66.51px;top:6.90px;font:400 19.6px/30px 'Liberation Sans','Noto Sans CJK SC',sans-serif;color:#bbbbbb;transform:scaleX(0.9943);"><u>F</u>ile</div>
<div class="t " style="left:115.98px;top:6.90px;font:400 19.6px/30px 'Liberation Sans','Noto Sans CJK SC',sans-serif;color:#bbbbbb;transform:scaleX(1.0204);"><u>E</u>dit</div>
<div class="t " style="left:169.50px;top:6.90px;font:400 19.6px/30px 'Liberation Sans','Noto Sans CJK SC',sans-serif;color:#bbbbbb;transform:scaleX(0.9659);"><u>V</u>iew</div>
<div class="t " style="left:228.00px;top:6.90px;font:400 19.6px/30px 'Liberation Sans','Noto Sans CJK SC',sans-serif;color:#bbbbbb;transform:scaleX(1.0008);"><u>N</u>avigate</div>
<div class="t " style="left:325.02px;top:6.90px;font:400 19.6px/30px 'Liberation Sans','Noto Sans CJK SC',sans-serif;color:#bbbbbb;transform:scaleX(0.9794);"><u>C</u>ode</div>
<div class="t " style="left:390.03px;top:6.90px;font:400 19.6px/30px 'Liberation Sans','Noto Sans CJK SC',sans-serif;color:#bbbbbb;transform:scaleX(0.9656);"><u>R</u>efactor</div>
<div class="t " style="left:481.52px;top:6.90px;font:400 19.6px/30px 'Liberation Sans','Noto Sans CJK SC',sans-serif;color:#bbbbbb;transform:scaleX(0.9839);">R<u>u</u>n</div>
<div class="t " style="left:533.00px;top:6.90px;font:400 19.6px/30px 'Liberation Sans','Noto Sans CJK SC',sans-serif;color:#bbbbbb;transform:scaleX(1.0012);"><u>T</u>ools</div>
<div class="t " style="left:598.50px;top:6.90px;font:400 19.6px/30px 'Liberation Sans','Noto Sans CJK SC',sans-serif;color:#bbbbbb;transform:scaleX(0.8827);">VC<u>S</u></div>
<div class="t " style="left:651.00px;top:6.90px;font:400 19.6px/30px 'Liberation Sans','Noto Sans CJK SC',sans-serif;color:#bbbbbb;transform:scaleX(1.0066);"><u>W</u>indow</div>
<div class="t " style="left:739.47px;top:6.90px;font:400 19.6px/30px 'Liberation Sans','Noto Sans CJK SC',sans-serif;color:#bbbbbb;transform:scaleX(1.0279);"><u>H</u>elp</div>
<div class="t " style="left:822.50px;top:6.00px;font:400 18.3px/30px 'Liberation Sans','Noto Sans CJK SC',sans-serif;color:#8f9193;transform:scaleX(0.9707);">基于公司制度</div>
<div class="t " style="left:929.27px;top:6.00px;font:400 18.6px/30px 'Liberation Sans','Noto Sans CJK SC',sans-serif;color:#8f9193;transform:scaleX(1.0326);">RAG - llm.py</div>
<div class="t " style="left:18.40px;top:51.10px;font:700 18.6px/30px 'Liberation Sans','Noto Sans CJK SC',sans-serif;color:#bbbbbb;transform:scaleX(0.9592);">基于公司制度</div>
<div class="t " style="left:126.07px;top:49.60px;font:700 19.6px/30px 'Liberation Sans','Noto Sans CJK SC',sans-serif;color:#bbbbbb;transform:scaleX(0.9314);">RAG</div>
<div class="t " style="left:213.48px;top:49.20px;font:400 19.6px/30px 'Liberation Sans','Noto Sans CJK SC',sans-serif;color:#bbbbbb;transform:scaleX(1.0225);">llm.py</div>
<div class="t " style="left:1483.46px;top:50.00px;font:400 19.6px/30px 'Liberation Sans','Noto Sans CJK SC',sans-serif;color:#bbbbbb;transform:scaleX(1.0400);letter-spacing:0.098px;">main</div>
<div class="t " style="left:81.53px;top:91.50px;font:400 19.6px/30px 'Liberation Sans','Noto Sans CJK SC',sans-serif;color:#bbbbbb;transform:scaleX(0.9663);">Project</div>
<div class="t " style="left:98.40px;top:130.00px;font:700 18.6px/30px 'Liberation Sans','Noto Sans CJK SC',sans-serif;color:#bbbbbb;transform:scaleX(0.9610);">基于公司制度</div>
<div class="t " style="left:206.06px;top:128.70px;font:700 19.6px/30px 'Liberation Sans','Noto Sans CJK SC',sans-serif;color:#bbbbbb;transform:scaleX(0.9362);">RAG</div>
<div class="t " style="left:257.00px;top:128.50px;font:400 19.6px/30px 'Liberation Sans','Noto Sans CJK SC',sans-serif;color:#7b7d7e;transform:scaleX(0.9615);">0% files, 100% lines covered</div>
<div class="t " style="left:554.98px;top:91.00px;font:400 19.6px/30px 'Liberation Sans','Noto Sans CJK SC',sans-serif;color:#bbbbbb;transform:scaleX(1.0225);">llm.py</div>
<div class="t " style="left:528.02px;top:122.00px;font:400 19.6px/30px 'Liberation Sans','Noto Sans CJK SC',sans-serif;color:#bbbbbb;transform:scaleX(0.9831);">MyCustomLoader</div>
<div class="t " style="left:716.03px;top:122.00px;font:400 19.6px/30px 'Liberation Sans','Noto Sans CJK SC',sans-serif;color:#bbbbbb;transform:scaleX(0.9702);">lazy_load()</div>
<div class="t " style="left:42.49px;top:161.00px;font:400 19.6px/30px 'Liberation Sans','Noto Sans CJK SC',sans-serif;color:#bbbbbb;transform:scaleX(1.0125);">Debug:</div>
<div class="t " style="left:165.00px;top:161.00px;font:400 19.6px/30px 'Liberation Sans','Noto Sans CJK SC',sans-serif;color:#bbbbbb;transform:scaleX(1.0013);">demo12</div>
<div class="t " style="left:323.48px;top:161.00px;font:400 19.6px/30px 'Liberation Sans','Noto Sans CJK SC',sans-serif;color:#bbbbbb;transform:scaleX(1.0229);">main</div>
<div class="t " style="left:95.49px;top:205.00px;font:400 17px/30px 'Liberation Sans','Noto Sans CJK SC',sans-serif;color:#bbbbbb;transform:scaleX(1.0135);">Debugger</div>
<div class="t " style="left:209.80px;top:205.00px;font:400 17px/30px 'Liberation Sans','Noto Sans CJK SC',sans-serif;color:#bbbbbb;transform:scaleX(0.9820);">Console</div>
<div class="t " style="left:75.00px;top:963.30px;font:400 17px/30px 'Liberation Sans','Noto Sans CJK SC',sans-serif;color:#bbbbbb;transform:scaleX(1.0264);">Version Control</div>
<div class="t " style="left:251.51px;top:963.30px;font:400 17px/30px 'Liberation Sans','Noto Sans CJK SC',sans-serif;color:#bbbbbb;transform:scaleX(0.9922);">Run</div>
<div class="t " style="left:335.46px;top:963.30px;font:400 17px/30px 'Liberation Sans','Noto Sans CJK SC',sans-serif;color:#ffffff;transform:scaleX(1.0382);">Debug</div>
<div class="t " style="left:445.51px;top:963.30px;font:400 17px/30px 'Liberation Sans','Noto Sans CJK SC',sans-serif;color:#bbbbbb;transform:scaleX(0.9900);">Python Packages</div>
<div class="t " style="left:634.00px;top:963.30px;font:400 17px/30px 'Liberation Sans','Noto Sans CJK SC',sans-serif;color:#bbbbbb;transform:scaleX(0.9881);">TODO</div>
<div class="t " style="left:739.49px;top:963.30px;font:400 17px/30px 'Liberation Sans','Noto Sans CJK SC',sans-serif;color:#bbbbbb;transform:scaleX(1.0079);">Python Console</div>
<div class="t " style="left:917.50px;top:963.30px;font:400 17px/30px 'Liberation Sans','Noto Sans CJK SC',sans-serif;color:#bbbbbb;transform:scaleX(1.0028);">Problems</div>
<div class="t " style="left:1046.00px;top:963.30px;font:400 17px/30px 'Liberation Sans','Noto Sans CJK SC',sans-serif;color:#bbbbbb;transform:scaleX(1.0400);">Terminal</div>
<div class="t " style="left:1169.00px;top:963.30px;font:400 17px/30px 'Liberation Sans','Noto Sans CJK SC',sans-serif;color:#bbbbbb;transform:scaleX(0.9276);">Services</div>
<div class="t " style="left:59.07px;top:991.20px;font:400 19.6px/30px 'Liberation Sans','Noto Sans CJK SC',sans-serif;color:#bbbbbb;transform:scaleX(0.9299);">Error</div>
<div class="t " style="left:105.97px;top:991.20px;font:400 19.6px/30px 'Liberation Sans','Noto Sans CJK SC',sans-serif;color:#bbbbbb;transform:scaleX(1.0320);">running</div>
<div class="t " style="left:179.01px;top:991.20px;font:400 19.6px/30px 'Liberation Sans','Noto Sans CJK SC',sans-serif;color:#bbbbbb;transform:scaleX(0.9896);">&#x27;demo3-Blocks应用&#x27;:</div>
<div class="t " style="left:356.56px;top:991.20px;font:400 19.6px/30px 'Liberation Sans','Noto Sans CJK SC',sans-serif;color:#bbbbbb;transform:scaleX(0.9374);">Coverage</div>
<div class="t " style="left:443.75px;top:991.20px;font:400 19.6px/30px 'Liberation Sans','Noto Sans CJK SC',sans-serif;color:#bbbbbb;transform:scaleX(0.9683);">cannot</div>
<div class="t " style="left:507.01px;top:991.20px;font:400 19.6px/30px 'Liberation Sans','Noto Sans CJK SC',sans-serif;color:#bbbbbb;transform:scaleX(0.9930);">be</div>
<div class="t " style="left:533.96px;top:991.20px;font:400 19.6px/30px 'Liberation Sans','Noto Sans CJK SC',sans-serif;color:#bbbbbb;transform:scaleX(1.0400);letter-spacing:0.198px;">imported</div>
<div class="t " style="left:620.00px;top:991.20px;font:400 19.6px/30px 'Liberation Sans','Noto Sans CJK SC',sans-serif;color:#bbbbbb;transform:scaleX(1.0338);">to</div>
<div class="t " style="left:643.00px;top:991.20px;font:400 19.6px/30px 'Liberation Sans','Noto Sans CJK SC',sans-serif;color:#bbbbbb;transform:scaleX(0.9774);">this</div>
<div class="t " style="left:679.50px;top:991.20px;font:400 19.6px/30px 'Liberation Sans','Noto Sans CJK SC',sans-serif;color:#bbbbbb;transform:scaleX(0.9993);">environment.</div>
<div class="t " style="left:797.80px;top:991.20px;font:400 19.6px/30px 'Liberation Sans','Noto Sans CJK SC',sans-serif;color:#bbbbbb;transform:scaleX(0.9532);">Install</div>
<div class="t " style="left:853.75px;top:991.20px;font:400 19.6px/30px 'Liberation Sans','Noto Sans CJK SC',sans-serif;color:#bbbbbb;transform:scaleX(0.9584);">coverage.py</div>
<div class="t " style="left:962.50px;top:991.20px;font:400 19.6px/30px 'Liberation Sans','Noto Sans CJK SC',sans-serif;color:#bbbbbb;transform:scaleX(0.9080);">or</div>
<div class="t " style="left:985.50px;top:991.20px;font:400 19.6px/30px 'Liberation Sans','Noto Sans CJK SC',sans-serif;color:#bbbbbb;transform:scaleX(0.9671);">enable</div>
<div class="t " style="left:1049.10px;top:991.20px;font:400 19.6px/30px 'Liberation Sans','Noto Sans CJK SC',sans-serif;color:#bbbbbb;transform:scaleX(0.8955);">&#x27;Use</div>
<div class="t " style="left:1088.96px;top:991.20px;font:400 19.6px/30px 'Liberation Sans','Noto Sans CJK SC',sans-serif;color:#bbbbbb;transform:scaleX(1.0392);">bundled</div>
<div class="t " style="left:1167.50px;top:991.20px;font:400 19.6px/30px 'Liberation Sans','Noto Sans CJK SC',sans-serif;color:#bbbbbb;transform:scaleX(0.9316);">cover...</div>
<div class="t " style="left:1230.23px;top:991.20px;font:400 19.6px/30px 'Liberation Sans','Noto Sans CJK SC',sans-serif;color:#bbbbbb;transform:scaleX(1.0250);">(today</div>
<div class="t " style="left:1291.06px;top:991.20px;font:400 19.6px/30px 'Liberation Sans','Noto Sans CJK SC',sans-serif;color:#bbbbbb;transform:scaleX(0.9389);">7:51)</div>
<div class="t " style="left:1378.64px;top:991.20px;font:400 19.6px/30px 'Liberation Sans','Noto Sans CJK SC',sans-serif;color:#bbbbbb;transform:scaleX(0.8600);letter-spacing:-0.647px;">CRLF</div>
<div class="t " style="left:1439.56px;top:991.20px;font:400 19.6px/30px 'Liberation Sans','Noto Sans CJK SC',sans-serif;color:#bbbbbb;transform:scaleX(0.9430);">UTF-8</div>
<div class="t " style="left:1511.00px;top:991.20px;font:400 19.6px/30px 'Liberation Sans','Noto Sans CJK SC',sans-serif;color:#bbbbbb;transform:scaleX(0.9221);">4 spaces</div>
<div class="t " style="left:1602.00px;top:991.20px;font:400 19.6px/30px 'Liberation Sans','Noto Sans CJK SC',sans-serif;color:#bbbbbb;transform:scaleX(0.9982);">Python</div>
<div class="t " style="left:1669.00px;top:991.20px;font:400 19.6px/30px 'Liberation Sans','Noto Sans CJK SC',sans-serif;color:#bbbbbb;transform:scaleX(0.9153);">3.10</div>
<div class="t " style="left:1710.82px;top:991.20px;font:400 19.6px/30px 'Liberation Sans','Noto Sans CJK SC',sans-serif;color:#bbbbbb;transform:scaleX(0.6833);">(</div>
<div class="t " style="left:1716.60px;top:991.90px;font:400 18.3px/30px 'Liberation Sans','Noto Sans CJK SC',sans-serif;color:#bbbbbb;transform:scaleX(0.9771);">基于公司制度</div>
<div class="t " style="left:1824.09px;top:991.20px;font:400 19.6px/30px 'Liberation Sans','Noto Sans CJK SC',sans-serif;color:#bbbbbb;transform:scaleX(0.9060);">RAG)</div>
<div class="r" style="left:24.60px;top:151.00px;transform:rotate(-90deg)"><div class="t " style="left:-0.99px;top:-20.00px;font:400 17px/30px 'Liberation Sans','Noto Sans CJK SC',sans-serif;color:#ffffff;transform:scaleX(0.9907);">Project</div></div>
<div class="r" style="left:24.80px;top:786.50px;transform:rotate(-90deg)"><div class="t " style="left:-0.97px;top:-21.00px;font:400 17.5px/30px 'Liberation Sans','Noto Sans CJK SC',sans-serif;color:#bbbbbb;transform:scaleX(0.9680);">Bookmarks</div></div>
<div class="r" style="left:24.80px;top:914.50px;transform:rotate(-90deg)"><div class="t " style="left:0.00px;top:-21.00px;font:400 17.5px/30px 'Liberation Sans','Noto Sans CJK SC',sans-serif;color:#bbbbbb;transform:scaleX(0.9962);">Structure</div></div>
<div class="r" style="left:1898.80px;top:129.50px;transform:rotate(90deg)"><div class="t " style="left:-0.97px;top:-21.00px;font:400 17.5px/30px 'Liberation Sans','Noto Sans CJK SC',sans-serif;color:#bbbbbb;transform:scaleX(0.9729);">Endpoints</div></div>
<div class="r" style="left:1898.80px;top:262.70px;transform:rotate(90deg)"><div class="t " style="left:-0.95px;top:-21.00px;font:400 17.5px/30px 'Liberation Sans','Noto Sans CJK SC',sans-serif;color:#bbbbbb;transform:scaleX(0.9470);">Database</div></div>
<div class="r" style="left:1898.80px;top:387.50px;transform:rotate(90deg)"><div class="t " style="left:0.00px;top:-21.00px;font:400 17.5px/30px 'Liberation Sans','Noto Sans CJK SC',sans-serif;color:#bbbbbb;transform:scaleX(0.9231);">SciView</div></div>
<div class="r" style="left:1898.80px;top:506.50px;transform:rotate(90deg)"><div class="t " style="left:-1.00px;top:-21.00px;font:400 17.5px/30px 'Liberation Sans','Noto Sans CJK SC',sans-serif;color:#bbbbbb;transform:scaleX(0.9993);">Notifications</div></div>
<div class="r" style="left:1898.80px;top:872.00px;transform:rotate(90deg)"><div class="t " style="left:0.00px;top:-21.00px;font:400 17.5px/30px 'Liberation Sans','Noto Sans CJK SC',sans-serif;color:#bbbbbb;transform:scaleX(0.9182);">Coverage</div></div>
<div class="t " style="left:1761.30px;top:312.20px;font:400 12px/30px 'Liberation Sans','Noto Sans CJK SC',sans-serif;color:#555555;transform:scaleX(0.9571);">0</div>
<div class="t " style="left:1780.00px;top:312.20px;font:400 12px/30px 'Liberation Sans','Noto Sans CJK SC',sans-serif;color:#555555;transform:scaleX(1.0382);">K/s</div>
<div class="t " style="left:1761.30px;top:333.60px;font:400 12px/30px 'Liberation Sans','Noto Sans CJK SC',sans-serif;color:#555555;transform:scaleX(0.9571);">0</div>
<div class="t " style="left:1780.00px;top:333.60px;font:400 12px/30px 'Liberation Sans','Noto Sans CJK SC',sans-serif;color:#555555;transform:scaleX(1.0382);">K/s</div>
<div class="t " style="left:1826.00px;top:322.80px;font:400 35px/30px 'Liberation Sans','Noto Sans CJK SC',sans-serif;color:#000000;transform:scaleX(0.9742);">47</div>
<div class="t " style="left:1865.00px;top:329.60px;font:400 16px/30px 'Liberation Sans','Noto Sans CJK SC',sans-serif;color:#000000;transform:scaleX(0.8214);">%</div>
<svg class="i" style="left:1880px;top:400px" width="40" height="90" viewBox="1880 400 40 90"><defs><linearGradient id="ring" x1="0" y1="0" x2="0" y2="1"><stop offset="0" stop-color="#6fcbe0"/><stop offset=".55" stop-color="#8fb8e8"/><stop offset="1" stop-color="#dc9fe0"/></linearGradient></defs><circle cx="1926.500" cy="444" r="33.700" fill="rgba(126,126,126,.82)" stroke="url(#ring)" stroke-width="6.200"/><path d="M1913.300 432.800c3-2 5.500-1 8 .5M1910 441.500l12 9.500M1920.500 455v7" stroke="#000" stroke-width="5" fill="none" stroke-linecap="round"/></svg>
<div class="b" style="left:35px;top:141.2px;width:397px;height:11.7px;background:rgba(166,166,166,0.28);"></div>
</div></body></html>
